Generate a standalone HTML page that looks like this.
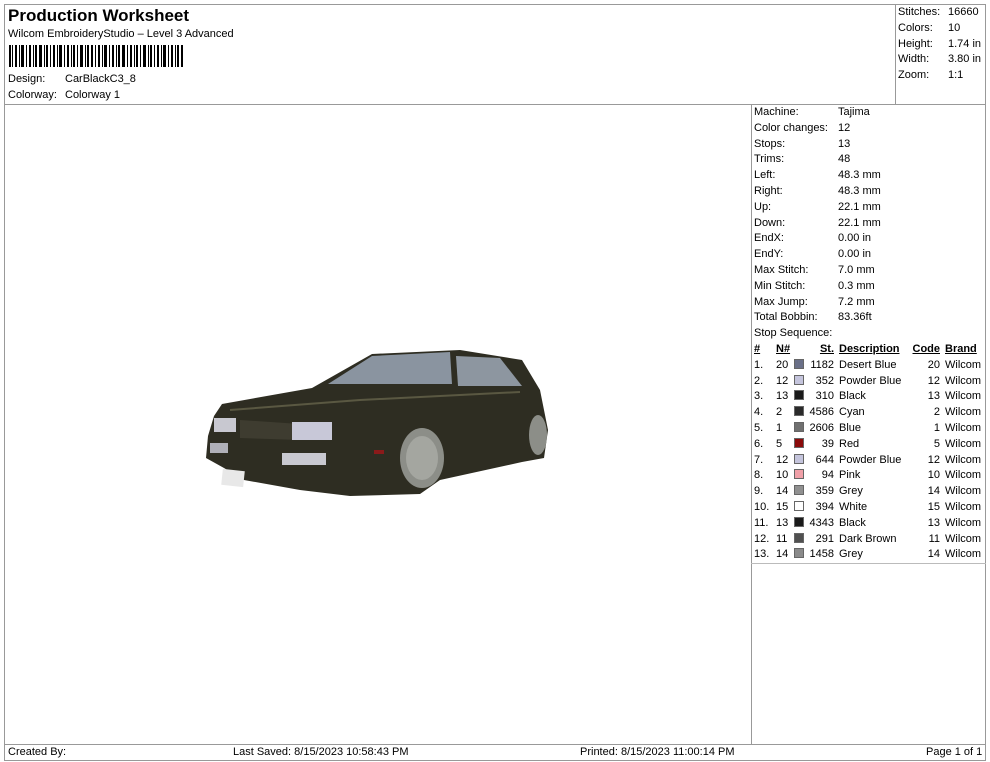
<!DOCTYPE html>
<html><head><meta charset="utf-8"><style>
*{margin:0;padding:0;box-sizing:border-box}
body{width:990px;height:762px;background:#fff;font-family:"Liberation Sans",Arial,sans-serif;font-size:11px;color:#000;position:relative;overflow:hidden}
.a{position:absolute;white-space:nowrap}
.ln{position:absolute;background:#999}
.u{text-decoration:underline;font-weight:bold}
.sw{display:inline-block;width:10px;height:10px;border:1px solid #666;vertical-align:-1px}
</style></head><body>
<div class="ln" style="left:4px;top:4px;width:982px;height:1px"></div>
<div class="ln" style="left:4px;top:4px;width:1px;height:757px"></div>
<div class="ln" style="left:985px;top:4px;width:1px;height:757px"></div>
<div class="ln" style="left:4px;top:760px;width:982px;height:1px"></div>
<div class="ln" style="left:4px;top:104px;width:982px;height:1px"></div>
<div class="ln" style="left:895px;top:4px;width:1px;height:100px"></div>
<div class="ln" style="left:751px;top:104px;width:1px;height:640px"></div>
<div class="ln" style="left:4px;top:744px;width:982px;height:1px"></div>
<div class="ln" style="left:751px;top:563px;width:235px;height:1px;background:#bbb"></div>

<div class="a" style="left:8px;top:6px;font-size:17px;font-weight:bold">Production Worksheet</div>
<div class="a" style="left:8px;top:28px">Wilcom EmbroideryStudio – Level 3 Advanced</div>
<svg class="a" style="left:9px;top:45px" width="174" height="22">
<g fill="#000">
<rect x="0" width="2" height="22"/><rect x="3" width="1" height="22"/><rect x="6" width="2" height="22"/><rect x="10" width="1" height="22"/><rect x="12" width="3" height="22"/><rect x="17" width="1" height="22"/><rect x="20" width="2" height="22"/><rect x="24" width="1" height="22"/><rect x="26" width="2" height="22"/><rect x="30" width="3" height="22"/><rect x="35" width="1" height="22"/><rect x="37" width="2" height="22"/><rect x="41" width="1" height="22"/><rect x="44" width="2" height="22"/><rect x="48" width="1" height="22"/><rect x="50" width="3" height="22"/><rect x="55" width="1" height="22"/><rect x="58" width="2" height="22"/><rect x="62" width="1" height="22"/><rect x="64" width="2" height="22"/><rect x="68" width="1" height="22"/><rect x="71" width="3" height="22"/><rect x="76" width="1" height="22"/><rect x="78" width="2" height="22"/><rect x="82" width="2" height="22"/><rect x="86" width="1" height="22"/><rect x="89" width="2" height="22"/><rect x="93" width="1" height="22"/><rect x="95" width="3" height="22"/><rect x="100" width="1" height="22"/><rect x="103" width="2" height="22"/><rect x="107" width="1" height="22"/><rect x="109" width="2" height="22"/><rect x="113" width="3" height="22"/><rect x="118" width="1" height="22"/><rect x="121" width="2" height="22"/><rect x="125" width="1" height="22"/><rect x="127" width="2" height="22"/><rect x="131" width="1" height="22"/><rect x="134" width="3" height="22"/><rect x="139" width="1" height="22"/><rect x="141" width="2" height="22"/><rect x="145" width="1" height="22"/><rect x="148" width="2" height="22"/><rect x="152" width="1" height="22"/><rect x="154" width="3" height="22"/><rect x="159" width="1" height="22"/><rect x="162" width="2" height="22"/><rect x="166" width="1" height="22"/><rect x="168" width="2" height="22"/><rect x="172" width="2" height="22"/>
</g></svg>
<div class="a" style="left:8px;top:73px">Design:</div><div class="a" style="left:65px;top:73px">CarBlackC3_8</div>
<div class="a" style="left:8px;top:89px">Colorway:</div><div class="a" style="left:65px;top:89px">Colorway 1</div>

<div class="a" style="left:898px;top:5px;line-height:15.8px">Stitches:<br>Colors:<br>Height:<br>Width:<br>Zoom:</div>
<div class="a" style="left:948px;top:5px;line-height:15.8px">16660<br>10<br>1.74 in<br>3.80 in<br>1:1</div>

<div class="a" style="left:754px;top:105px;line-height:15.8px">Machine:<br>Color changes:<br>Stops:<br>Trims:<br>Left:<br>Right:<br>Up:<br>Down:<br>EndX:<br>EndY:<br>Max Stitch:<br>Min Stitch:<br>Max Jump:<br>Total Bobbin:<br>Stop Sequence:</div>
<div class="a" style="left:838px;top:105px;line-height:15.8px">Tajima<br>12<br>13<br>48<br>48.3 mm<br>48.3 mm<br>22.1 mm<br>22.1 mm<br>0.00 in<br>0.00 in<br>7.0 mm<br>0.3 mm<br>7.2 mm<br>83.36ft</div>

<div class="a" style="left:754px;top:342px;line-height:15.8px"><span class="u">#</span><br>1.<br>2.<br>3.<br>4.<br>5.<br>6.<br>7.<br>8.<br>9.<br>10.<br>11.<br>12.<br>13.</div>
<div class="a" style="left:776px;top:342px;line-height:15.8px"><span class="u">N#</span><br>20<br>12<br>13<br>2<br>1<br>5<br>12<br>10<br>14<br>15<br>13<br>11<br>14</div>
<div class="a" style="left:794px;top:342px;line-height:15.8px"><br>
<span class="sw" style="background:#6a7088"></span><br><span class="sw" style="background:#c4c4dc"></span><br><span class="sw" style="background:#1a1a1a"></span><br><span class="sw" style="background:#2a2a2a"></span><br><span class="sw" style="background:#707070"></span><br><span class="sw" style="background:#8a0a0a"></span><br><span class="sw" style="background:#c4c4dc"></span><br><span class="sw" style="background:#f0a0a8"></span><br><span class="sw" style="background:#909090"></span><br><span class="sw" style="background:#fff"></span><br><span class="sw" style="background:#1a1a1a"></span><br><span class="sw" style="background:#505050"></span><br><span class="sw" style="background:#8a8a8a"></span></div>
<div class="a" style="left:800px;width:34px;top:342px;line-height:15.8px;text-align:right"><span class="u">St.</span><br>1182<br>352<br>310<br>4586<br>2606<br>39<br>644<br>94<br>359<br>394<br>4343<br>291<br>1458</div>
<div class="a" style="left:839px;top:342px;line-height:15.8px"><span class="u">Description</span><br>Desert Blue<br>Powder Blue<br>Black<br>Cyan<br>Blue<br>Red<br>Powder Blue<br>Pink<br>Grey<br>White<br>Black<br>Dark Brown<br>Grey</div>
<div class="a" style="left:905px;width:35px;top:342px;line-height:15.8px;text-align:right"><span class="u">Code</span><br>20<br>12<br>13<br>2<br>1<br>5<br>12<br>10<br>14<br>15<br>13<br>11<br>14</div>
<div class="a" style="left:945px;top:342px;line-height:15.8px"><span class="u">Brand</span><br>Wilcom<br>Wilcom<br>Wilcom<br>Wilcom<br>Wilcom<br>Wilcom<br>Wilcom<br>Wilcom<br>Wilcom<br>Wilcom<br>Wilcom<br>Wilcom<br>Wilcom</div>

<svg class="a" style="left:200px;top:340px" width="360" height="160">
<path d="M14 76 L22 64 L112 48 L172 14 L260 10 L322 20 L340 50 L348 90 L344 118 L322 122 L240 140 L220 154 L150 156 L100 150 L44 140 L24 128 L6 118 L8 96 Z" fill="#2e2d22"/>
<path d="M128 44 L172 16 L250 12 L252 44 Z" fill="#8a94a0"/>
<path d="M256 16 L300 18 L322 46 L258 46 Z" fill="#8d96a0"/>
<path d="M40 80 L100 84 L100 100 L40 98 Z" fill="#3e3c30"/>
<rect x="14" y="78" width="22" height="14" fill="#c8c8d0"/>
<rect x="92" y="82" width="40" height="18" fill="#c8c8d8"/>
<rect x="82" y="113" width="44" height="12" fill="#c8c8d0"/>
<rect x="10" y="103" width="18" height="10" fill="#b0b0b8"/>
<rect x="22" y="130" width="22" height="16" fill="#e8e8e8" transform="rotate(6 33 138)"/>
<ellipse cx="222" cy="118" rx="22" ry="30" fill="#8c8e88"/>
<ellipse cx="222" cy="118" rx="16" ry="22" fill="#a4a6a0"/>
<ellipse cx="338" cy="95" rx="9" ry="20" fill="#8c8e88"/>
<path d="M30 70 L160 60 L320 52" stroke="#5a5842" stroke-width="2" fill="none"/>
<rect x="174" y="110" width="10" height="4" fill="#8a1a1a"/>
</svg>

<div class="a" style="left:8px;top:746px">Created By:</div>
<div class="a" style="left:233px;top:746px">Last Saved: 8/15/2023 10:58:43 PM</div>
<div class="a" style="left:580px;top:746px">Printed: 8/15/2023 11:00:14 PM</div>
<div class="a" style="left:926px;top:746px">Page 1 of 1</div>
</body></html>
